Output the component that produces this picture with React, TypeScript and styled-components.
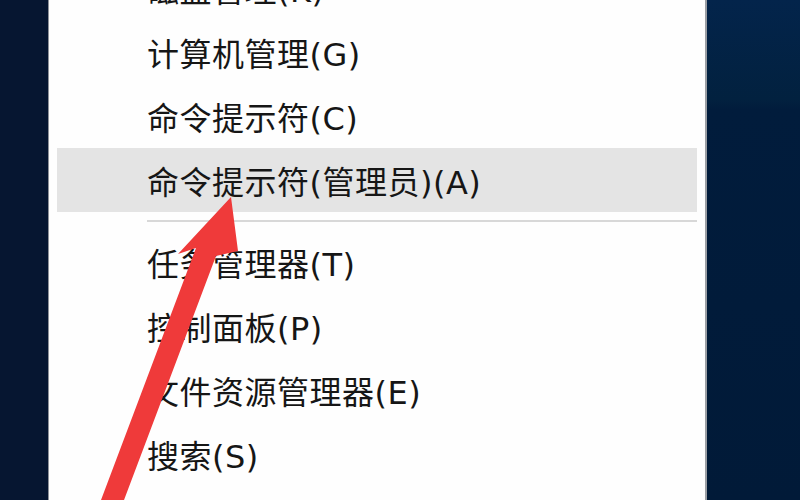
import React from "react";
import styled, { createGlobalStyle } from "styled-components";

const Global = createGlobalStyle`
  html, body {
    margin: 0;
    padding: 0;
    height: 500px;
    overflow: hidden;
    background: #061530;
  }
`;

const Desktop = styled.div`
  position: relative;
  display: flex;
  width: 800px;
  height: 500px;
  overflow: hidden;
  background: #061530;
`;

const LeftStrip = styled.div`
  width: 48px;
  flex: none;
  background: #061631;
`;

const RightStrip = styled.div`
  flex: 1;
  background: linear-gradient(180deg, #03244b 0px, #02213f 100px, #011c3c 110px, #011a38 500px);
`;

const Menu = styled.div`
  width: 659px;
  flex: none;
  margin-top: -44px;
  padding: 0 8px;
  box-sizing: border-box;
  background: #fefefe;
  border-left: 1px solid #8e9299;
  border-right: 2px solid #9a9ea4;
  display: flex;
  flex-direction: column;
`;

const Item = styled.div<{ $active?: boolean }>`
  height: 64px;
  flex: none;
  display: flex;
  align-items: center;
  padding-left: 90px;
  background: ${(p) => (p.$active ? "#e4e4e4" : "transparent")};
  font-family: "DejaVu Sans", "Noto Sans CJK SC", sans-serif;
  font-size: 32px;
  letter-spacing: 0.5px;
  color: #161616;
  white-space: nowrap;
`;

const Separator = styled.div`
  height: 18px;
  flex: none;
  display: flex;
  align-items: center;
  padding-left: 90px;

  &::after {
    content: "";
    display: block;
    flex: 1;
    height: 2px;
    background: #d8d8d8;
  }
`;

const Arrow = styled.svg`
  position: absolute;
  left: 0;
  top: 0;
  pointer-events: none;
`;

type Entry = { label: string; active?: boolean } | "sep";

const entries: Entry[] = [
  { label: "磁盘管理(K)" },
  { label: "计算机管理(G)" },
  { label: "命令提示符(C)" },
  { label: "命令提示符(管理员)(A)", active: true },
  "sep",
  { label: "任务管理器(T)" },
  { label: "控制面板(P)" },
  { label: "文件资源管理器(E)" },
  { label: "搜索(S)" },
  { label: "运行(R)" },
];

export default function App() {
  return (
    <>
      <Global />
      <Desktop>
        <LeftStrip />
        <Menu>
          {entries.map((e, i) =>
            e === "sep" ? (
              <Separator key={i} />
            ) : (
              <Item key={i} $active={e.active}>
                {e.label}
              </Item>
            )
          )}
        </Menu>
        <RightStrip />
        <Arrow width="800" height="500" viewBox="0 0 800 500">
          <polygon
            points="231,197 238,251 216,256 118,516 98,508 196,248 178,254"
            fill="#ef3a3a"
          />
        </Arrow>
      </Desktop>
    </>
  );
}
